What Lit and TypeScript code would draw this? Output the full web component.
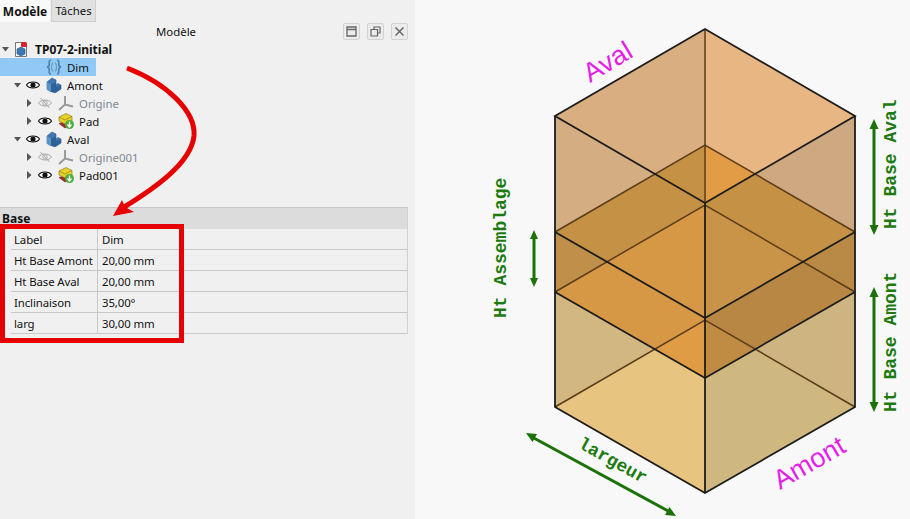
import { LitElement, html, css, svg } from 'lit';
import { customElement } from 'lit/decorators.js';

type Kind = 'doc' | 'vars' | 'body' | 'origin' | 'pad';
interface Row {
  label: string;
  level: number;
  kind: Kind;
  tri?: 'open' | 'closed';
  eye?: 'on' | 'off';
  cls?: string;
}

const ROWS: Row[] = [
  { label: 'TP07-2-initial', level: 0, kind: 'doc', tri: 'open', cls: 'bold' },
  { label: 'Dim', level: 1, kind: 'vars', cls: 'sel' },
  { label: 'Amont', level: 1, kind: 'body', tri: 'open', eye: 'on' },
  { label: 'Origine', level: 2, kind: 'origin', tri: 'closed', eye: 'off', cls: 'dim' },
  { label: 'Pad', level: 2, kind: 'pad', tri: 'closed', eye: 'on' },
  { label: 'Aval', level: 1, kind: 'body', tri: 'open', eye: 'on' },
  { label: 'Origine001', level: 2, kind: 'origin', tri: 'closed', eye: 'off', cls: 'dim' },
  { label: 'Pad001', level: 2, kind: 'pad', tri: 'closed', eye: 'on' },
];

const PROPS = [
  ['Label', 'Dim'],
  ['Ht Base Amont', '20,00 mm'],
  ['Ht Base Aval', '20,00 mm'],
  ['Inclinaison', '35,00°'],
  ['larg', '30,00 mm'],
];

// painted regions of the see-through boxes, they don't overlap so order is free
const REGIONS: [string, string][] = [
  ['705,29 555,116 655,174 705,145', '#d9ae80'],
  ['705,29 855,116 755,174 705,145', '#e8b682'],
  ['555,116 655,174 555,232', '#d5ad82'],
  ['855,116 755,174 855,232', '#cea881'],
  ['655,174 705,145 705,203', '#c59145'],
  ['755,174 705,145 705,203', '#e29c45'],
  ['555,232 655,174 705,203 705,205 607,262', '#c59145'],
  ['855,232 755,174 705,203 705,205 803,262', '#c59145'],
  ['607,262 705,205 705,318', '#d69845'],
  ['803,262 705,205 705,318', '#c99448'],
  ['555,232 607,262 555,292', '#c08f4a'],
  ['855,232 803,262 855,292', '#b98a45'],
  ['555,292 607,262 705,318 705,320 655,349', '#d69845'],
  ['855,292 803,262 705,318 705,320 755,349', '#b98744'],
  ['655,349 705,320 705,378', '#e09b45'],
  ['755,349 705,320 705,378', '#c08c44'],
  ['555,292 655,349 555,407', '#d2b780'],
  ['855,292 755,349 855,407', '#cdb480'],
  ['555,407 655,349 705,378 705,493', '#e7c480'],
  ['855,407 755,349 705,378 705,493', '#cfb780'],
];

const BLACK = [
  'M705 29L555 116L705 203L855 116Z',
  'M555 116V407L705 493L855 407V116',
  'M705 203V493',
  'M555 292L705 378L855 292',
  'M555 232L705 318L855 232',
];
const BROWN = [
  'M705 29V203',
  'M555 232L705 145L855 232',
  'M555 292L705 205L855 292',
  'M555 407L705 320L855 407',
];

function icon(kind: Kind) {
  switch (kind) {
    case 'doc':
      return html`<svg width="16" height="16" viewBox="0 0 16 16">
        <path d="M1.500 1.500h8l3 3v11h-11z" fill="#fff" stroke="#777" />
        <path d="M3 8l4-2 4 2v5l-4 2-4-2z" fill="#3d78b5" stroke="#1d4f80" stroke-width=".6" />
        <rect x="7" y="1" width="6" height="5" rx="1.500" fill="#d8232a" />
      </svg>`;
    case 'vars':
      return html`<svg width="16" height="16" viewBox="0 0 16 16" fill="none" stroke="#4f86ab" stroke-width="1.700">
        <path d="M5 1C2.800 1 3.200 3 3.200 5.200 3.200 7 2.500 7.800 1 8c1.500.2 2.200 1 2.200 2.800C3.200 13 2.800 15 5 15" />
        <path d="M11 1c2.200 0 1.800 2 1.800 4.200 0 1.800.7 2.600 2.200 2.800-1.500.2-2.200 1-2.200 2.800 0 2.200.4 4.200-1.800 4.200" />
        <path d="M6.800 3.500C5.300 6 5.300 10 6.800 12.500M9.200 3.500C10.700 6 10.700 10 9.200 12.500" stroke="#6f9dbc" stroke-width="1.300" />
      </svg>`;
    case 'body':
      return html`<svg width="16" height="16" viewBox="0 0 16 16">
        <path d="M1 5l5-4 4 2v5l2-1.500 3 1.500v4l-6 4-8-3.500z" fill="#3f77b3" stroke="#2a5688" stroke-width=".6" />
        <path d="M1 5l4 2.500v8L1 12.500z" fill="#5b92c8" />
        <path d="M5 7.500l5-2.500v5l5-2v4l-6 3.500-4-.5z" fill="#2f6299" />
      </svg>`;
    case 'origin':
      return html`<svg width="16" height="16" viewBox="0 0 16 16" fill="none" stroke="#9a9a9a" stroke-width="2">
        <path d="M7 1v8.500M7 9.500L1 15M7 9.500l8 2" />
      </svg>`;
    case 'pad':
      return html`<svg width="16" height="16" viewBox="0 0 16 16">
        <path d="M1 10.500l5-1.500 6 3-5 3z" fill="#a52a2a" stroke="#6d1a1a" stroke-width=".6" />
        <path d="M1 4l7-3.500 6 3v4.500l-7 3-6-3z" fill="#e8d22a" stroke="#80711a" stroke-width=".6" />
        <path d="M1 4l6 3 7-3.500" fill="none" stroke="#80711a" stroke-width=".6" />
        <circle cx="11.500" cy="11.500" r="4.500" fill="#4caf3c" />
        <path d="M11.500 8.500v5M9.500 11.500l2 2.500 2-2.500" fill="none" stroke="#fff" stroke-width="1.300" />
      </svg>`;
  }
}

function eye(state?: 'on' | 'off') {
  if (state === 'on') {
    return html`<svg width="14" height="10" viewBox="0 0 14 10">
      <path d="M.5 5C3 1 11 1 13.500 5 11 9 3 9 .5 5z" fill="#fff" stroke="#111" stroke-width="1.200" />
      <circle cx="7" cy="5" r="2.600" fill="#111" />
    </svg>`;
  }
  return html`<svg width="14" height="12" viewBox="0 0 14 12" fill="none" stroke="#a8a8a8">
    <path d="M.5 6C3 2 11 2 13.500 6 11 10 3 10 .5 6z" />
    <circle cx="7" cy="6" r="2.200" />
    <path d="M2.500 1l9 10" />
  </svg>`;
}

@customElement('app-root')
export class AppRoot extends LitElement {
  static styles = css`
    :host {
      display: block;
      width: 910px;
      height: 519px;
      overflow: hidden;
      font-family: 'Noto Sans', sans-serif;
      font-size: 11.400px;
      color: #111;
    }
    .page {
      display: flex;
      height: 100%;
    }
    .side {
      position: relative;
      width: 415px;
      flex: none;
      background: #f0f0f0;
      display: flex;
      flex-direction: column;
    }
    .tabs {
      display: flex;
      height: 22px;
    }
    .tab {
      padding: 0 4px;
      display: flex;
      align-items: center;
      background: #f9f9f9;
      font-weight: 700;
      font-size: 12px;
      width: 42px;
      justify-content: center;
    }
    .tab.off {
      font-weight: 400;
      font-size: 11.400px;
      background: #e1e1e1;
      border: 1px solid #cfcfcf;
      border-top: none;
      width: 35px;
      margin-left: 1px;
    }
    .head {
      height: 18px;
      display: flex;
      align-items: center;
      width: 408px;
    }
    .title {
      flex: 1;
      text-align: center;
      padding-left: 9px;
    }
    .btns {
      display: flex;
      gap: 7px;
    }
    .btn {
      width: 15px;
      height: 15px;
      border: 1px solid #d2d2d2;
      border-radius: 2px;
      background: #ececec;
      display: flex;
      align-items: center;
      justify-content: center;
    }
    .tree {
      display: flex;
      flex-direction: column;
    }
    .row {
      height: 18px;
      display: flex;
      align-items: center;
      white-space: nowrap;
      box-sizing: border-box;
    }
    .row.sel {
      background: #90c8f6;
      width: 96px;
    }
    .row.bold {
      font-weight: 700;
      font-size: 12px;
    }
    .row.dim .name {
      color: #7f8a94;
    }
    .tri {
      width: 14px;
      flex: none;
      display: flex;
      padding-left: 2px;
      box-sizing: border-box;
    }
    .eye {
      width: 20px;
      flex: none;
      display: flex;
    }
    .ico {
      width: 21px;
      flex: none;
      display: flex;
    }
    .props {
      margin-top: 23px;
      width: 408px;
      border-right: 1px solid #d0d0d0;
      box-sizing: border-box;
    }
    .group {
      height: 22px;
      background: #dcdcdc;
      border-top: 1px solid #c8c8c8;
      box-sizing: border-box;
      display: flex;
      align-items: center;
      padding-left: 2px;
      font-weight: 700;
      font-size: 12px;
    }
    .prop {
      height: 21px;
      display: grid;
      grid-template-columns: 87px 1fr;
      border-bottom: 1px solid #c8c8c8;
      box-sizing: border-box;
      margin-left: 11px;
      white-space: nowrap;
      letter-spacing: -0.1px;
    }
    .prop span {
      display: flex;
      align-items: center;
    }
    .prop .k {
      padding-left: 3px;
      border-right: 1px solid #c8c8c8;
    }
    .prop .v {
      padding-left: 4px;
    }
    .marks {
      position: absolute;
      left: 0;
      top: 0;
      pointer-events: none;
    }
    .canvas {
      flex: 1;
      background: #f8f8f8;
    }
    .canvas svg {
      display: block;
    }
    .mag {
      font-family: 'Liberation Sans', sans-serif;
      font-size: 27px;
      fill: #e41ee8;
    }
    .grn {
      font-family: 'Liberation Mono', monospace;
      font-size: 18px;
      font-weight: 700;
      fill: #1c7a0f;
    }
  `;

  private renderRow(r: Row) {
    return html`<div class="row ${r.cls ?? ''}" style="padding-left:${r.level * 12}px">
      <span class="tri">
        ${r.tri === 'open'
          ? html`<svg width="7" height="6"><path d="M0 1h7L3.500 5.500z" fill="#555" /></svg>`
          : r.tri === 'closed'
          ? html`<svg width="6" height="8"><path d="M1 0v8l4.500-4z" fill="#555" /></svg>`
          : ''}
      </span>
      ${r.level > 0 ? html`<span class="eye">${r.eye ? eye(r.eye) : ''}</span>` : ''}
      <span class="ico">${icon(r.kind)}</span>
      <span class="name">${r.label}</span>
    </div>`;
  }

  private arrow(d: string, head: string) {
    return svg`<path d=${d} fill="none" stroke="#1a7208" stroke-width="3" /><path d=${head} fill="#1a7208" />`;
  }

  render() {
    return html`<div class="page">
      <div class="side">
        <div class="tabs">
          <div class="tab">Modèle</div>
          <div class="tab off">Tâches</div>
        </div>
        <div class="head">
          <div class="title">Modèle</div>
          <div class="btns">
            <div class="btn">
              <svg width="11" height="11" fill="none" stroke="#666" stroke-width="1.300"><path d="M1 1h9v9H1zM1 3.500h9" /></svg>
            </div>
            <div class="btn">
              <svg width="11" height="11" fill="none" stroke="#666" stroke-width="1.200"><path d="M4 3V1h6v6H7.500M1 3.500h6.500V10H1z" /></svg>
            </div>
            <div class="btn">
              <svg width="11" height="11" fill="none" stroke="#666" stroke-width="1.500"><path d="M1.500 1.500l8 8M9.500 1.500l-8 8" /></svg>
            </div>
          </div>
        </div>
        <div class="tree">${ROWS.map((r) => this.renderRow(r))}</div>
        <div class="props">
          <div class="group">Base</div>
          ${PROPS.map(
            ([k, v]) => html`<div class="prop"><span class="k">${k}</span><span class="v">${v}</span></div>`
          )}
        </div>
        <svg class="marks" width="415" height="519">
          <path d="M127 68C168 84 196 112 194 136C191 164 152 190 121 209" fill="none" stroke="#e60000" stroke-width="5" />
          <path d="M113 216L122 200L125 207L134 212z" fill="#e60000" />
          <rect x="2.500" y="226.500" width="179" height="114" fill="none" stroke="#e60000" stroke-width="5" />
        </svg>
      </div>
      <div class="canvas">
        <svg width="495" height="519" viewBox="415 0 495 519">
          ${REGIONS.map(([p, c]) => svg`<polygon points=${p} fill=${c} />`)}
          ${BROWN.map((d) => svg`<path d=${d} fill="none" stroke="#5a3c18" stroke-width="1.500" />`)}
          ${BLACK.map((d) => svg`<path d=${d} fill="none" stroke="#1c1c1c" stroke-width="1.800" />`)}
          <text class="mag" transform="translate(590 83) rotate(-31)">Aval</text>
          <text class="mag" transform="translate(780 490) rotate(-30)">Amont</text>
          <text class="grn" transform="translate(506 318) rotate(-90)">Ht Assemblage</text>
          <text class="grn" transform="translate(896 229) rotate(-90)">Ht Base Aval</text>
          <text class="grn" transform="translate(896 412) rotate(-90)">Ht Base Amont</text>
          <text class="grn" transform="translate(577 447) rotate(29)">largeur</text>
          ${this.arrow('M534 236V280', 'M534 230l4 9h-8zM534 287l4-9h-8z')}
          ${this.arrow('M874 126V228', 'M874 119l4.500 10h-9zM874 235l4.500-10h-9z')}
          ${this.arrow('M874 294V405', 'M874 287l4.500 10h-9zM874 412l4.500-10h-9z')}
          ${this.arrow('M532 437L670 512', 'M526 433l11 1-4.500 8zM676 516l-11-1 4.500-8z')}
        </svg>
      </div>
    </div>`;
  }
}
